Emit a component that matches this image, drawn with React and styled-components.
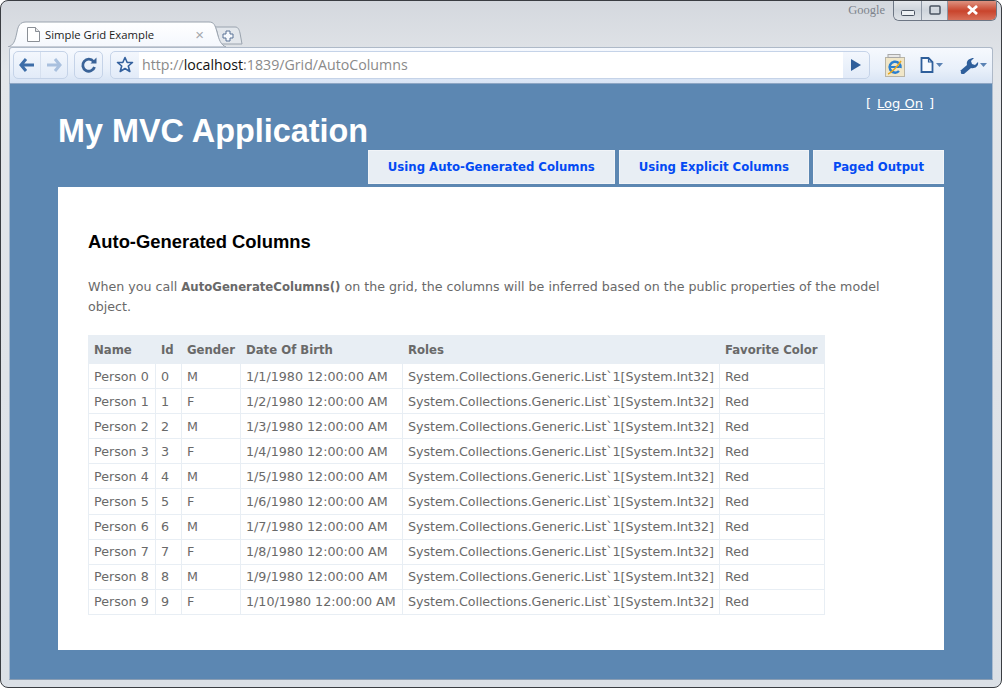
import React from "react";
import styled, { createGlobalStyle } from "styled-components";

const GlobalStyle = createGlobalStyle`
  html, body {
    margin: 0;
    padding: 0;
    background: #ffffff;
  }
`;

const Frame = styled.div`
  box-sizing: border-box;
  width: 1002px;
  height: 688px;
  padding: 0 8px 7px 8px;
  display: flex;
  flex-direction: column;
  border: 1px solid #3a3d42;
  border-radius: 8px;
  background: linear-gradient(#d4d8de 0, #e3e6ea 70px, #dbe0e6 100%);
  overflow: hidden;
`;
const TitleBar = styled.div`
  height: 20px;
  display: flex;
  justify-content: flex-end;
  margin-right: -4px;
`;
const Google = styled.span`
  font-family: "Liberation Serif", serif;
  font-size: 12.5px;
  line-height: 19px;
  color: #7d838c;
  margin-right: 8px;
`;
const WindowControls = styled.div`
  display: flex;
  height: 20px;
  margin-top: -1px;
  border: 1px solid #6d7684;
  border-top: 0;
  border-radius: 0 0 6px 6px;
  overflow: hidden;
`;
const ControlButton = styled.div`
  width: ${(p) => p.$w}px;
  display: flex;
  align-items: center;
  justify-content: center;
  background: ${(p) =>
    p.$close
      ? "linear-gradient(#e09a88, #c9442c 55%, #d8705a)"
      : "linear-gradient(#e6e9ed, #cfd5dc 50%, #dfe3e8)"};
  border-right: ${(p) => (p.$close ? "0" : "1px solid #8d96a3")};
`;
const TabRow = styled.div`
  height: 26px;
  display: flex;
  align-items: flex-end;
`;
const Tab = styled.div`
  position: relative;
  width: 210px;
  height: 26px;
  display: flex;
  align-items: center;
  box-sizing: border-box;
  padding: 1px 15px 0 18px;
`;
const TabShape = styled.svg`
  position: absolute;
  left: -1px;
  top: 0;
`;
const TabIcon = styled.svg`
  position: relative;
  flex: none;
  margin-right: 5px;
`;
const TabTitle = styled.span`
  position: relative;
  flex: 1;
  font-family: "Open Sans", sans-serif;
  font-size: 11.3px;
  color: #1c1c1c;
  white-space: nowrap;
`;
const TabClose = styled.span`
  position: relative;
  font-family: "Liberation Sans", sans-serif;
  font-size: 15px;
  color: #a4a8ad;
`;
const NewTab = styled.svg`
  margin: 0 0 2px -4px;
`;
const Toolbar = styled.div`
  box-sizing: border-box;
  height: 37px;
  display: flex;
  align-items: center;
  padding: 0 0 1px 3px;
  background: linear-gradient(#f6f9fe, #e9f0fa 60%, #d7e3f4);
  border: 1px solid #aeb9c8;
  border-bottom: 1px solid #8ea6c4;
  border-radius: 3px 3px 0 0;
`;
const NavGroup = styled.div`
  display: flex;
  height: 26px;
  border: 1px solid #c5d3e8;
  border-radius: 5px;
  margin-right: ${(p) => p.$gap}px;
  background: linear-gradient(#f3f7fd, #e2ebf8);
`;
const NavButton = styled.div`
  width: ${(p) => p.$w}px;
  display: flex;
  align-items: center;
  justify-content: center;
  & + & {
    border-left: 1px solid #d6e0ef;
  }
`;
const AddressBar = styled.div`
  flex: none;
  width: 758px;
  height: 26px;
  display: flex;
  border: 1px solid #c5d3e8;
  border-radius: 5px;
  margin-right: 15px;
  background: linear-gradient(#f3f7fd, #e2ebf8);
  overflow: hidden;
`;
const UrlField = styled.div`
  flex: 1;
  background: #ffffff;
  padding-left: 3px;
  font-family: "Open Sans", sans-serif;
  font-size: 14.2px;
  line-height: 25px;
  color: #8a8a8a;
  white-space: nowrap;
`;
const UrlHost = styled.span`
  color: #111111;
`;
const ToolIcons = styled.div`
  display: flex;
  align-items: center;
  gap: 15px;
`;
const Page = styled.div`
  flex: 1;
  box-sizing: border-box;
  padding: 0 48px;
  background: #5c87b2;
  border-bottom: 1px solid #8a9db3;
  border-right: 1px solid #a9bbd0;
  border-left: 1px solid #a9bbd0;
  display: flex;
  flex-direction: column;
`;
const LogOnRow = styled.div`
  height: 28px;
  padding-top: 11px;
  box-sizing: border-box;
  text-align: right;
  padding-right: 10px;
  font-family: "DejaVu Sans", Verdana, sans-serif;
  font-size: 13px;
  line-height: 17px;
  color: #ffffff;
`;
const LogOnLink = styled.a`
  color: #ffffff;
  text-decoration: underline;
  margin: 0 6px;
`;
const Title = styled.h1`
  margin: 0;
  height: 38px;
  font-family: "Liberation Sans", Arial, sans-serif;
  font-size: 32.4px;
  font-weight: bold;
  line-height: 38px;
  color: #ffffff;
  white-space: nowrap;
`;
const Menu = styled.ul`
  display: flex;
  justify-content: flex-end;
  gap: 4px;
  list-style: none;
  margin: 0 0 3px;
  padding: 0;
`;
const MenuItem = styled.li`
  height: 34px;
  box-sizing: border-box;
  padding: 0 20px;
  background: #e8eef4;
  box-shadow: inset 0 0 0 1px #f1f4f8;
  font-family: "DejaVu Sans Condensed", "DejaVu Sans", Verdana, sans-serif;
  font-size: 13px;
  font-weight: bold;
  line-height: 34px;
  color: #034af3;
`;
const Content = styled.div`
  box-sizing: border-box;
  height: 463px;
  padding: 30px;
  background: #ffffff;
  font-family: "DejaVu Sans", Verdana, sans-serif;
  font-size: 12.7px;
  color: #696969;
`;
const Heading = styled.h2`
  margin: 14px 0 24px;
  font-family: "Liberation Sans", Arial, sans-serif;
  font-size: 18.4px;
  line-height: 22px;
  font-weight: bold;
  color: #000000;
`;
const Intro = styled.p`
  margin: 0 0 18px;
  font-size: 12.65px;
  line-height: 20px;
`;
const Method = styled.b`
  font-family: "DejaVu Sans Condensed", "DejaVu Sans", Verdana, sans-serif;
  font-size: 13px;
`;
const Grid = styled.table`
  table-layout: fixed;
  width: 736px;
  border-collapse: collapse;
`;
const Col = styled.col`
  width: ${(p) => p.$w}px;
`;
const Th = styled.th`
  height: 28px;
  padding: 0 5px;
  box-sizing: border-box;
  background: #e8eef4;
  border: 1px solid #e8eef4;
  text-align: left;
  font-family: "DejaVu Sans Condensed", "DejaVu Sans", Verdana, sans-serif;
  font-size: 13px;
  font-weight: bold;
  white-space: nowrap;
`;
const Td = styled.td`
  height: 25.1px;
  padding: 0 5px;
  box-sizing: border-box;
  border: 1px solid #e8eef4;
  white-space: nowrap;
  letter-spacing: ${(p) => (p.$tight ? "-0.06px" : "0")};
`;

const columns = [
  { name: "Name", width: 67 },
  { name: "Id", width: 26 },
  { name: "Gender", width: 59 },
  { name: "Date Of Birth", width: 162 },
  { name: "Roles", width: 317 },
  { name: "Favorite Color", width: 105 },
];

const people = Array.from({ length: 10 }, (_, i) => ({
  name: `Person ${i}`,
  id: i,
  gender: i % 2 ? "F" : "M",
  birth: `1/${i + 1}/1980 12:00:00 AM`,
  roles: "System.Collections.Generic.List`1[System.Int32]",
  color: "Red",
}));

const BackIcon = () => (
  <svg width="16" height="14" viewBox="0 0 16 14">
    <path d="M7 1 2 7l5 6M2.500 7H15" fill="none" stroke="#3d6da8" strokeWidth="3" />
  </svg>
);
const ForwardIcon = () => (
  <svg width="16" height="14" viewBox="0 0 16 14">
    <path d="M9 1l5 6-5 6M13.500 7H1" fill="none" stroke="#a9c0de" strokeWidth="3" />
  </svg>
);
const ReloadIcon = () => (
  <svg width="18" height="18" viewBox="0 0 18 18">
    <path d="M13.500 5.500A6 6 0 1 0 14.500 11" fill="none" stroke="#3a6398" strokeWidth="2.800" />
    <path d="M10.500 7.500H16.500V1.500Z" fill="#3a6398" />
  </svg>
);
const StarIcon = () => (
  <svg width="18" height="18" viewBox="0 0 18 18">
    <path d="M9 1.500l2.200 5h5.300l-4.200 3.500 1.500 5.500L9 12.500l-4.800 3 1.500-5.500L1.500 6.500h5.300Z" fill="#f2f6fc" stroke="#34619e" strokeWidth="1.600" strokeLinejoin="round" />
  </svg>
);
const GoIcon = () => (
  <svg width="10" height="12" viewBox="0 0 10 12">
    <path d="M0 0l10 6-10 6Z" fill="#2f5f9b" />
  </svg>
);
const IeIcon = () => (
  <svg width="20" height="23" viewBox="0 0 20 23">
    <rect x="0.500" y="3.500" width="19" height="19" fill="#f0e6c8" stroke="#b8b4a6" />
    <rect x="3" y="0.500" width="12" height="3" fill="#e8e8e8" stroke="#a8a8a8" />
    <path d="M15.500 14A5.500 5.500 0 1 0 14 17" fill="none" stroke="#2a7fd0" strokeWidth="2.500" />
    <path d="M5.500 13h9" stroke="#2a7fd0" strokeWidth="1.800" />
    <path d="M3 20c3-1 10-8 13-13" fill="none" stroke="#e8a820" strokeWidth="1.500" />
  </svg>
);
const PageIcon = () => (
  <svg width="24" height="16" viewBox="0 0 24 16">
    <path d="M1.500 1h7l4 4v10h-11Z" fill="#f8fbff" stroke="#2f5f9b" strokeWidth="1.800" />
    <path d="M8.500 1v4h4" fill="none" stroke="#2f5f9b" strokeWidth="1.200" />
    <path d="M16 6h7l-3.500 4Z" fill="#5a82b4" />
  </svg>
);
const WrenchIcon = () => (
  <svg width="28" height="17" viewBox="0 0 28 17">
    <path d="M1 14 8 8C7 4 10 1 15 1l-3 3 1 3 3 1 3-3c1 4-3 7-7 6l-7 6c-1 1-4 0-3-3Z" fill="#2f5f9b" />
    <path d="M21 6h7l-3.500 4Z" fill="#5a82b4" />
  </svg>
);

const App = () => (
  <>
    <GlobalStyle />
    <Frame>
      <TitleBar>
        <Google>Google</Google>
        <WindowControls>
          <ControlButton $w={27}>
            <svg width="14" height="12" viewBox="0 0 14 12">
              <rect x="0.500" y="6.500" width="13" height="5" rx="1" fill="#eef1f4" stroke="#4a5360" />
            </svg>
          </ControlButton>
          <ControlButton $w={25}>
            <svg width="12" height="10" viewBox="0 0 12 10">
              <rect x="1" y="1" width="10" height="8" rx="1" fill="none" stroke="#4a5360" strokeWidth="1.500" />
            </svg>
          </ControlButton>
          <ControlButton $w={48} $close>
            <svg width="13" height="10" viewBox="0 0 13 10">
              <path d="M2 1l9 8M11 1l-9 8" stroke="#ffffff" strokeWidth="2.800" />
            </svg>
          </ControlButton>
        </WindowControls>
      </TitleBar>
      <TabRow>
        <Tab>
          <TabShape width="218" height="26" viewBox="0 0 218 26">
            <defs>
              <linearGradient id="tabFill" x1="0" y1="0" x2="0" y2="1">
                <stop offset="0" stopColor="#ffffff" />
                <stop offset="1" stopColor="#f4f7fd" />
              </linearGradient>
            </defs>
            <path d="M0 26C6 24 7 20 9 11 10 5 12 1 18 1H201c5 0 6 3 8 10 2 8 4 13 9 15Z" fill="url(#tabFill)" stroke="#9aa3ae" />
          </TabShape>
          <TabIcon width="13" height="15" viewBox="0 0 13 15">
            <path d="M0.500 0.500h8l4 4v10h-12Z" fill="#ffffff" stroke="#8a8f96" />
            <path d="M8.500 0.500v4h4" fill="#e8e8e8" stroke="#8a8f96" />
          </TabIcon>
          <TabTitle>Simple Grid Example</TabTitle>
          <TabClose>×</TabClose>
        </Tab>
        <NewTab width="28" height="19" viewBox="0 0 28 19">
          <path d="M0 1H20c3 0 4 2 5 6l2 11H5C3 14 3 5 0 1Z" fill="#e3e7ec" stroke="#9aa3ae" />
          <path d="M11 5h4v3h3v4h-3v3h-4v-3H8V8h3Z" fill="#f6f9fd" stroke="#5a7396" />
        </NewTab>
      </TabRow>
      <Toolbar>
        <NavGroup $gap={6}>
          <NavButton $w={26}><BackIcon /></NavButton>
          <NavButton $w={26}><ForwardIcon /></NavButton>
        </NavGroup>
        <NavGroup $gap={7}>
          <NavButton $w={27}><ReloadIcon /></NavButton>
        </NavGroup>
        <AddressBar>
          <NavButton $w={28}><StarIcon /></NavButton>
          <UrlField>
            http://<UrlHost>localhost</UrlHost>:1839/Grid/AutoColumns
          </UrlField>
          <NavButton $w={26}><GoIcon /></NavButton>
        </AddressBar>
        <ToolIcons>
          <IeIcon />
          <PageIcon />
          <WrenchIcon />
        </ToolIcons>
      </Toolbar>
      <Page>
        <LogOnRow>
          [<LogOnLink>Log On</LogOnLink>]
        </LogOnRow>
        <Title>My MVC Application</Title>
        <Menu>
          <MenuItem>Using Auto-Generated Columns</MenuItem>
          <MenuItem>Using Explicit Columns</MenuItem>
          <MenuItem>Paged Output</MenuItem>
        </Menu>
        <Content>
          <Heading>Auto-Generated Columns</Heading>
          <Intro>
            When you call <Method>AutoGenerateColumns()</Method> on the grid, the columns will be inferred based on the public properties of the model object.
          </Intro>
          <Grid>
            <colgroup>
              {columns.map((c) => (
                <Col key={c.name} $w={c.width} />
              ))}
            </colgroup>
            <thead>
              <tr>
                {columns.map((c) => (
                  <Th key={c.name}>{c.name}</Th>
                ))}
              </tr>
            </thead>
            <tbody>
              {people.map((p) => (
                <tr key={p.id}>
                  <Td>{p.name}</Td>
                  <Td>{p.id}</Td>
                  <Td>{p.gender}</Td>
                  <Td>{p.birth}</Td>
                  <Td $tight>{p.roles}</Td>
                  <Td>{p.color}</Td>
                </tr>
              ))}
            </tbody>
          </Grid>
        </Content>
      </Page>
    </Frame>
  </>
);

export default App;
